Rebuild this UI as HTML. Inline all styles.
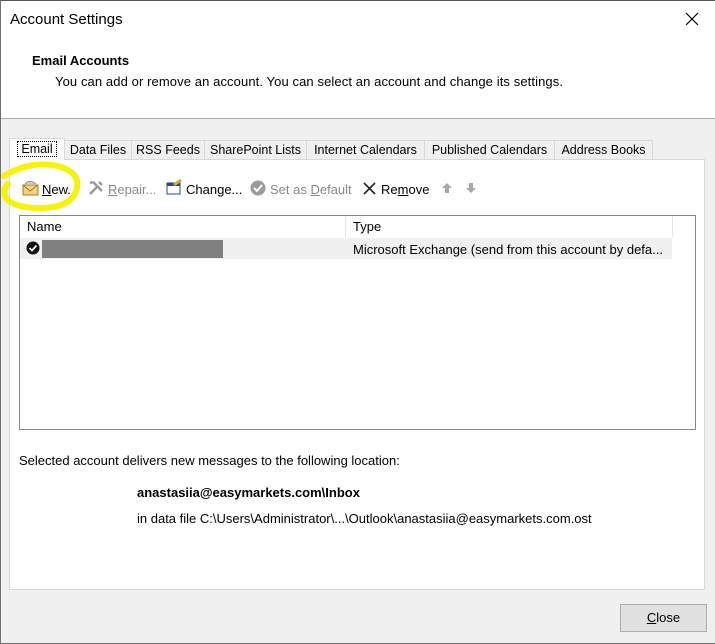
<!DOCTYPE html>
<html><head><style>
body{margin:0;width:715px;height:643px;background:#f0f0f0;font-family:"Liberation Sans",sans-serif;font-size:13px;color:#000;position:relative;overflow:hidden}
.a{position:absolute;white-space:nowrap}
.tab{position:absolute;top:140px;height:19px;border:1px solid #d9d9d9;border-bottom:none;background:#f0f0f0;line-height:19px;text-align:center;box-sizing:border-box;font-size:12.5px}
u{text-decoration:underline}
.g{color:#8a8a8a}
</style></head><body>
<div class="a" style="left:0;top:0;width:715px;height:118px;background:#fff;border-bottom:1px solid #ababab"></div>
<div class="a" style="left:0;top:0;width:714px;height:642px;border:1px solid #707070;border-top-color:#555"></div>
<div class="a" style="left:10px;top:11px;font-size:15px">Account Settings</div>
<svg class="a" style="left:685px;top:12px" width="14" height="14"><path d="M1 1L13 13M13 1L1 13" stroke="#000" stroke-width="1.2"/></svg>
<div class="a" style="left:32px;top:53px;font-weight:bold">Email Accounts</div>
<div class="a" style="left:55px;top:74px;letter-spacing:0.1px">You can add or remove an account. You can select an account and change its settings.</div>
<div class="a" style="left:9px;top:159px;width:696px;height:431px;background:#fff;border:1px solid #d9d9d9;box-sizing:border-box"></div>
<div class="tab" style="left:9px;top:138px;height:22px;width:56px;background:#fff;line-height:20px;z-index:2"><span style="border:1px dotted #000;padding:0 3px">Email</span></div>
<div class="tab" style="left:64px;width:68px">Data Files</div>
<div class="tab" style="left:131px;width:74px">RSS Feeds</div>
<div class="tab" style="left:204px;width:103px">SharePoint Lists</div>
<div class="tab" style="left:306px;width:119px">Internet Calendars</div>
<div class="tab" style="left:424px;width:131px">Published Calendars</div>
<div class="tab" style="left:554px;width:99px">Address Books</div>
<svg class="a" style="left:22px;top:180px" width="18" height="16"><rect x="1" y="5" width="15" height="10" fill="#f3d27a" stroke="#a07a30"/><path d="M1 5L8 11L16 5" stroke="#a07a30" fill="none"/><path d="M3 4Q8 -1 14 4" fill="#c8d0d8" stroke="#8a96a2"/></svg>
<div class="a" style="left:42px;top:182px"><u>N</u>ew...</div>
<svg class="a" style="left:88px;top:180px" width="17" height="16"><path d="M2 14L10 6M5 2L14 11M11 2l3 3M2 3l3-1" stroke="#999" stroke-width="2.5"/></svg>
<div class="a g" style="left:108px;top:182px"><u>R</u>epair...</div>
<svg class="a" style="left:166px;top:179px" width="17" height="16"><rect x="1" y="4" width="13" height="11" fill="#fff" stroke="#1e4b8a"/><rect x="1" y="4" width="13" height="3" fill="#1e4b8a"/><path d="M8 6L15 1" stroke="#d6a43a" stroke-width="3"/></svg>
<div class="a" style="left:186px;top:182px">Chan<u>g</u>e...</div>
<svg class="a" style="left:250px;top:180px" width="16" height="16"><circle cx="8" cy="8" r="7.5" fill="#9a9a9a"/><path d="M4 8l3 3 5-6" stroke="#fff" stroke-width="2" fill="none"/></svg>
<div class="a g" style="left:270px;top:182px">Set as <u>D</u>efault</div>
<svg class="a" style="left:363px;top:182px" width="13" height="13"><path d="M1 1L12 12M12 1L1 12" stroke="#222" stroke-width="1.6"/></svg>
<div class="a" style="left:381px;top:182px">Re<u>m</u>ove</div>
<svg class="a" style="left:442px;top:182px" width="40" height="12"><path d="M5 1L10 6H7V11H3V6H0Z" fill="#a8a8a8"/><path d="M27 1H31V6H34L29 11L24 6H27Z" fill="#a8a8a8"/></svg>
<svg class="a" style="left:0;top:158px" width="84" height="56"><path d="M4 18Q30 2 58 8Q80 14 77 30Q72 50 40 50Q14 50 6 40Q2 32 8 26" fill="none" stroke="#f7f20a" stroke-width="6" stroke-linecap="round"/></svg>
<div class="a" style="left:19px;top:215px;width:677px;height:215px;border:1px solid #828790;box-sizing:border-box;background:#fff"></div>
<div class="a" style="left:20px;top:216px;width:326px;height:21px;border-right:1px solid #e5e5e5;line-height:21px;padding-left:7px;box-sizing:border-box">Name</div>
<div class="a" style="left:347px;top:216px;width:326px;height:21px;border-right:1px solid #e5e5e5;line-height:21px;padding-left:6px;box-sizing:border-box">Type</div>
<div class="a" style="left:20px;top:238px;width:652px;height:21px;background:#f0f0f0"></div>
<svg class="a" style="left:26px;top:241px" width="14" height="14"><circle cx="7" cy="7" r="6.5" fill="#111"/><path d="M3.5 7l2.5 2.5 4.5-5" stroke="#fff" stroke-width="1.8" fill="none"/></svg>
<div class="a" style="left:42px;top:240px;width:181px;height:18px;background:#808080"></div>
<div class="a" style="left:353px;top:242px">Microsoft Exchange (send from this account by defa...</div>
<div class="a" style="left:19px;top:453px">Selected account delivers new messages to the following location:</div>
<div class="a" style="left:137px;top:485px;font-weight:bold">anastasiia@easymarkets.com\Inbox</div>
<div class="a" style="left:137px;top:511px">in data file C:\Users\Administrator\...\Outlook\anastasiia@easymarkets.com.ost</div>
<div class="a" style="left:620px;top:604px;width:87px;height:28px;border:1px solid #adadad;background:#e1e1e1;box-sizing:border-box;text-align:center;line-height:26px"><u>C</u>lose</div>
</body></html>
